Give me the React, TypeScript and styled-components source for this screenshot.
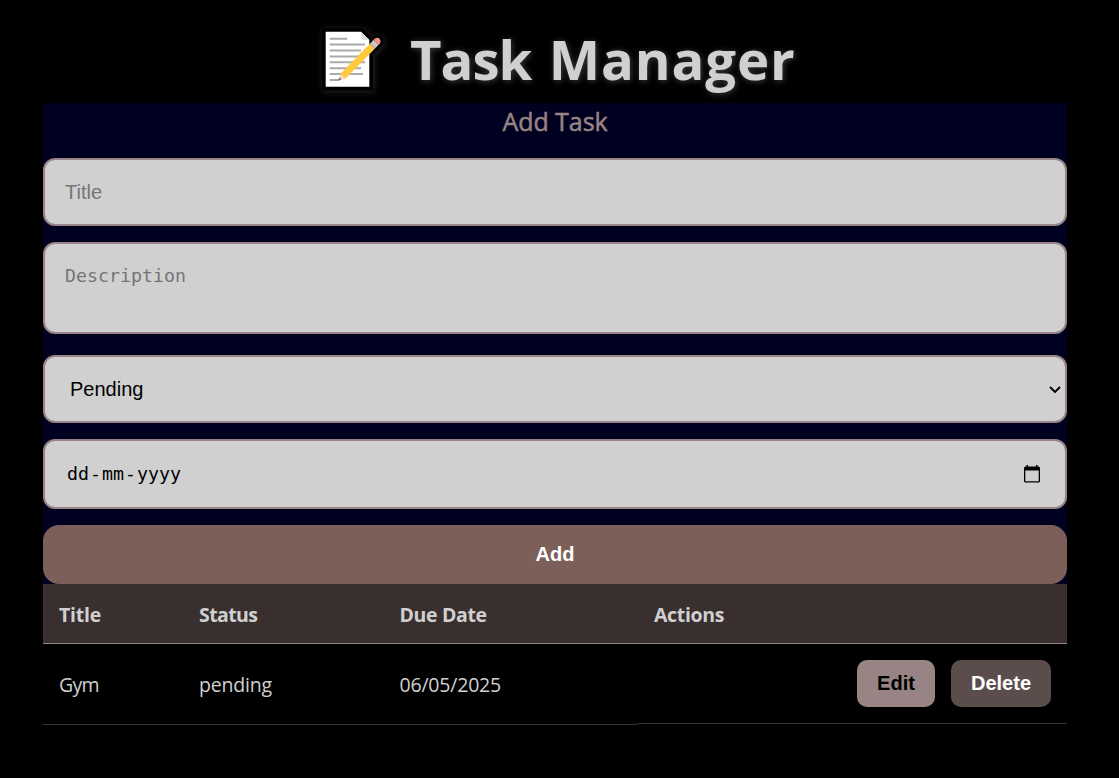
import React from "react";
import styled, { createGlobalStyle, css } from "styled-components";

const GlobalStyle = createGlobalStyle`
  * { box-sizing: border-box; }
  body {
    margin: 0;
    background: #000;
    color: #d0d0d0;
    font-family: "Open Sans", "Noto Sans", sans-serif;
    font-size: 20px;
  }
`;

const Page = styled.main`
  width: 1110px;
  min-height: 778px;
  padding: 20px 43px 0;
`;

const Heading = styled.h1`
  display: flex;
  align-items: center;
  height: 83px;
  margin: 0;
  padding-left: 272px;
  font-size: 54.5px;
  font-weight: 700;
  line-height: 75px;
  white-space: nowrap;
  text-shadow: 1px 1px 6px rgba(208, 208, 208, 0.3);
`;

const HeadingText = styled.span`
  margin: -5px 0 0 20px;
`;

const HeadingWord = styled.span<{ $spacing: number }>`
  letter-spacing: ${(p) => p.$spacing}px;
`;

const MemoSvg = styled.svg`
  flex: none;
  margin-top: -8px;
  overflow: visible;
  filter: drop-shadow(1px 1px 3px rgba(208, 208, 208, 0.18));
`;

const Form = styled.form`
  display: flex;
  flex-direction: column;
  background: #000020;
`;

const FormTitle = styled.h2`
  height: 55px;
  margin: 0;
  color: #988484;
  font-size: 25px;
  font-weight: 500;
  line-height: 37px;
  letter-spacing: -0.05px;
  text-align: center;
  -webkit-text-stroke: 0.5px #988484;
`;

const field = css`
  width: 100%;
  border: 2px solid #988484;
  border-radius: 12px;
  background: #d0d0d0;
  color: #000;
  outline: none;
`;

const mono = css`
  font-family: "DejaVu Sans Mono", monospace;
  font-size: 18.27px;
`;

const TitleInput = styled.input`
  ${field}
  height: 68px;
  margin-bottom: 16px;
  padding: 0 20px;
  font-family: "Liberation Sans", Arial, sans-serif;
  font-size: 20px;
  &::placeholder { color: #757575; }
`;

const DescriptionInput = styled.textarea`
  ${field}
  ${mono}
  height: 92px;
  margin-bottom: 21px;
  padding: 20px;
  line-height: 24px;
  resize: none;
  &::placeholder { color: #757575; }
`;

const PickerField = styled.div<{ $height: number; $inset: string }>`
  ${field}
  display: flex;
  align-items: center;
  justify-content: space-between;
  height: ${(p) => p.$height}px;
  margin-bottom: 16px;
  padding: ${(p) => p.$inset};
  font-family: "Liberation Sans", Arial, sans-serif;
`;

const DateText = styled.span`
  ${mono}
  display: flex;
  margin-bottom: 2px;
`;

const DatePart = styled.span`
  padding: 0 1px;
`;

const AddButton = styled.button`
  height: 59px;
  border: 0;
  border-radius: 16px;
  background: #7d5f59;
  color: #fff;
  font: bold 20px "Liberation Sans", Arial, sans-serif;
`;

const Row = styled.div<{ $head?: boolean }>`
  display: grid;
  grid-template-columns: 140px 200.5px 254.5px 429px;
  align-items: start;
  background: ${(p) => (p.$head ? "#3a2f2f" : "transparent")};
  font-weight: ${(p) => (p.$head ? 700 : 400)};
`;

const Cell = styled.div<{ $head?: boolean; $spacing: number }>`
  height: ${(p) => (p.$head ? 60 : 81)}px;
  padding: 0 16px;
  border-bottom: 1px solid ${(p) => (p.$head ? "#988484" : "#333")};
  font-size: 19.5px;
  line-height: ${(p) => (p.$head ? 61 : 81)}px;
  letter-spacing: ${(p) => p.$spacing}px;
  white-space: nowrap;
`;

const ActionsCell = styled.div`
  display: flex;
  justify-content: flex-end;
  gap: 16px;
  height: 80px;
  padding: 16px;
  border-bottom: 1px solid #333;
`;

const ActionButton = styled.button<{ $danger?: boolean }>`
  width: ${(p) => (p.$danger ? 100 : 78)}px;
  height: 47px;
  padding: 0;
  border: 0;
  border-radius: 10px;
  background: ${(p) => (p.$danger ? "#5c4d4d" : "#988484")};
  color: ${(p) => (p.$danger ? "#fff" : "#000")};
  font: bold 20px "Liberation Sans", Arial, sans-serif;
`;

const MemoIcon = () => (
  <MemoSvg width="75" height="75" viewBox="0 0 75 75" aria-hidden="true">
    <path d="M10.7 11.7H46L54.3 20V66.7H10.7Z" fill="#000" stroke="#000" strokeWidth="7.4" />
    <path d="M24 60 62 21.5" stroke="#000" strokeWidth="13" strokeLinecap="round" />
    <path d="M10.7 11.7H46L54.3 20V66.7H10.7Z" fill="#fff" />
    <path d="M46 11.7V20H54.3Z" fill="#dedede" />
    <path
      d="M14.7 18.7H32.3M14.7 24.5H50M14.7 30.5H46M14.7 36.5H50M14.7 42.3H50M14.7 48.3H46M14.7 54H48M14.7 60H24"
      stroke="#aaa"
      strokeWidth="2"
    />
    <path d="M25.5 54 30.5 59 23.2 60.5Z" fill="#f8d5c2" />
    <path d="M24.4 57.3 26.5 59.6 22.8 60.8Z" fill="#7c7270" />
    <path d="M25.5 53.8 55 23.6 60 28.4 30.3 58.8Z" fill="#ffc83d" />
    <path d="M55 23.6 58.7 19.8 63.7 24.7 60 28.4Z" fill="#c8c8c8" />
    <path d="M58.7 19.8 60.2 18.5Q62.8 17 64.7 19Q66.5 21 65 23.4L63.7 24.7Z" fill="#f8958c" />
  </MemoSvg>
);

const ChevronIcon = () => (
  <svg width="12" height="8" viewBox="0 0 12 8" fill="none" aria-hidden="true">
    <path d="M1 2 6 7 11 2" stroke="#000" strokeWidth="1.9" />
  </svg>
);

const CalendarIcon = () => (
  <svg width="16" height="18" viewBox="0 0 16 18" aria-hidden="true">
    <path d="M2.5 0H4V1.5H12V0H13.5V1.5H14.5Q16 1.5 16 3V16Q16 17.5 14.5 17.5H1.5Q0 17.5 0 16V3Q0 1.5 1.5 1.5H2.5ZM1.3 5.5V16.2H14.7V5.5Z" fill="#000" fillRule="evenodd" />
  </svg>
);

export default function App() {
  return (
    <>
      <GlobalStyle />
      <Page>
        <Heading>
          <MemoIcon />
          <HeadingText>
            <HeadingWord $spacing={-1}>Task</HeadingWord>
            <HeadingWord $spacing={3.3}>{" "}</HeadingWord>
            <HeadingWord $spacing={0.85}>Manager</HeadingWord>
          </HeadingText>
        </Heading>
        <Form onSubmit={(e) => e.preventDefault()}>
          <FormTitle>Add Task</FormTitle>
          <TitleInput placeholder="Title" />
          <DescriptionInput placeholder="Description" />
          <PickerField $height={68} $inset="0 4px 0 25px">
            <span>Pending</span>
            <ChevronIcon />
          </PickerField>
          <PickerField $height={70} $inset="0 25px 0 21px">
            <DateText>
              <DatePart>dd</DatePart>-<DatePart>mm</DatePart>-<DatePart>yyyy</DatePart>
            </DateText>
            <CalendarIcon />
          </PickerField>
          <AddButton>Add</AddButton>
        </Form>
        <Row $head>
          <Cell $head $spacing={-0.25}>Title</Cell>
          <Cell $head $spacing={-0.6}>Status</Cell>
          <Cell $head $spacing={-0.35}>Due Date</Cell>
          <Cell $head $spacing={-0.35}>Actions</Cell>
        </Row>
        <Row>
          <Cell $spacing={-0.7}>Gym</Cell>
          <Cell $spacing={-0.2}>pending</Cell>
          <Cell $spacing={-0.2}>06/05/2025</Cell>
          <ActionsCell>
            <ActionButton>Edit</ActionButton>
            <ActionButton $danger>Delete</ActionButton>
          </ActionsCell>
        </Row>
      </Page>
    </>
  );
}
